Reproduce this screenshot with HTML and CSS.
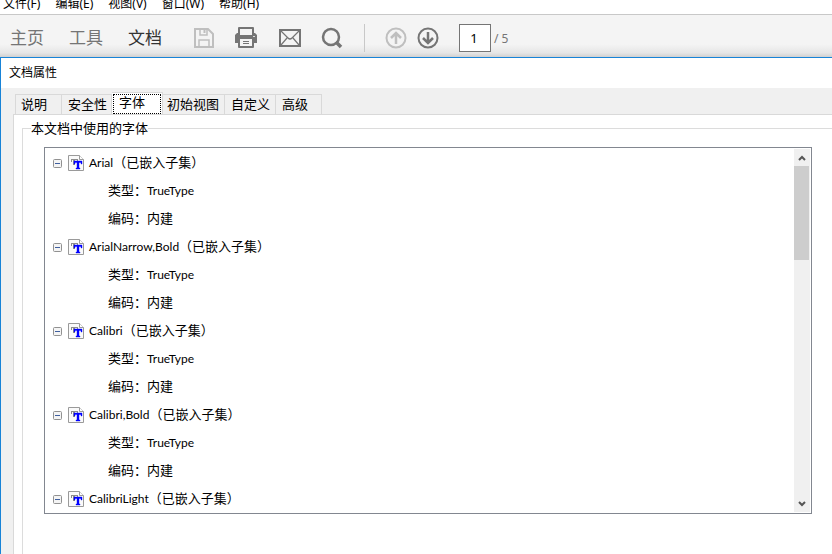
FILE: index.html
```html
<!DOCTYPE html>
<html lang="zh-CN">
<head>
    <meta charset="UTF-8">
    <title>文档属性</title>
    <link rel="stylesheet" href="styles.css">
</head>
<body>
    <!-- Iconos compartidos -->
    <svg class="sprite" width="0" height="0">
        <symbol id="minus" viewBox="0 0 9 9">
            <rect x=".5" y=".5" width="8" height="8" rx="1" fill="#f4f4f4" stroke="#919191"/>
            <path d="M2 4.500h5" stroke="#3f5f9f"/>
        </symbol>
        <symbol id="truetype" viewBox="0 0 16 16">
            <path d="M.5.5h11l4 4v11H.5z" fill="#fafafa" stroke="#9a9a9a"/>
            <path d="M11.500.5v4h4" fill="#fff" stroke="#9a9a9a"/>
            <path d="M3 7V4h7v3H9V5H7v5H5V5H4v2z" fill="#8c8c8c"/>
            <path d="M6 9V6h8v3h-1V7.500h-2V13h1v1H8v-1h1V7.500H7V9z" fill="#0000ff" stroke="#0000ff" stroke-width=".4"/>
        </symbol>
    </svg>

    <nav class="menubar">
        <button class="menu">文件(F)</button>
        <button class="menu">编辑(E)</button>
        <button class="menu">视图(V)</button>
        <button class="menu">窗口(W)</button>
        <button class="menu">帮助(H)</button>
    </nav>

    <div class="toolbar">
        <div class="views">
            <button class="view">主页</button>
            <button class="view">工具</button>
            <button class="view active">文档</button>
        </div>
        <div class="tools">
            <button class="tool disabled" aria-label="保存">
                <svg width="22" height="22" viewBox="0 0 22 22" fill="none" stroke="currentColor" stroke-width="2">
                    <path d="M2 2h13l5 5v13H2z"/>
                    <path d="M7 2v6h7V2M6 20v-7h10v7" stroke-width="1.500"/>
                    <path d="M11.500 3v3"/>
                </svg>
            </button>
            <button class="tool" aria-label="打印">
                <svg width="22" height="22" viewBox="0 0 22 22">
                    <path d="M2 1q0-1 1-1h14q1 0 1 1v6H2z" fill="currentColor"/>
                    <path d="M4 2h12v5H4z" fill="#f4f4f4"/>
                    <path d="M1 6h3v2h12V6h3l2 2v8h-3v4q0 1-1 1H3q-1 0-1-1v-4H-1V8z" fill="currentColor"/>
                    <path d="M4 12h12v7H4z" fill="#f4f4f4"/>
                    <path d="M7 14.500h6M7 16.500h6" stroke="currentColor"/>
                    <path d="M17 9h2v1h-2z" fill="#ddd"/>
                </svg>
            </button>
            <button class="tool" aria-label="电子邮件">
                <svg width="22" height="22" viewBox="0 0 22 22" fill="none" stroke="currentColor">
                    <path d="M1 3h20v16H1z" stroke-width="2"/>
                    <path d="M2 4l7 7q2 2 4 0l7-7M2 18l6-7M20 18l-6-7" stroke-width="1.200"/>
                </svg>
            </button>
            <button class="tool" aria-label="查找">
                <svg width="22" height="22" viewBox="0 0 22 22" fill="none" stroke="currentColor">
                    <circle cx="9" cy="10" r="8" stroke-width="2.500"/>
                    <path d="M14 15l5 5" stroke-width="3.500"/>
                </svg>
            </button>
        </div>
        <div class="pager">
            <button class="tool disabled" aria-label="上一页">
                <svg width="22" height="22" viewBox="0 0 22 22" fill="none" stroke="currentColor" stroke-width="2">
                    <circle cx="11" cy="11" r="9.500"/>
                    <path d="M11 17V6M6 11l5-5 5 5" stroke-width="2.500"/>
                </svg>
            </button>
            <button class="tool" aria-label="下一页">
                <svg width="22" height="22" viewBox="0 0 22 22" fill="none" stroke="currentColor" stroke-width="2">
                    <circle cx="11" cy="11" r="9.500"/>
                    <path d="M11 5v11M6 11l5 5 5-5" stroke-width="2.500"/>
                </svg>
            </button>
            <input type="text" id="page" class="page" value="1" aria-label="页码">
            <label for="page" class="total">/ 5</label>
        </div>
    </div>

    <div class="dialog">
        <div class="title">文档属性</div>
        <div class="content">
            <div class="tabs" role="tablist">
                <button class="tab" role="tab">说明</button>
                <button class="tab" role="tab">安全性</button>
                <button class="tab selected" role="tab" aria-selected="true"><span>字体</span></button>
                <button class="tab" role="tab">初始视图</button>
                <button class="tab" role="tab">自定义</button>
                <button class="tab" role="tab">高级</button>
            </div>
            <div class="panel">
                <fieldset class="group">
                    <legend>本文档中使用的字体</legend>
                    <div class="list">
                        <ul class="tree">
                            <li class="font"><svg class="toggle"><use href="#minus"/></svg><svg class="type"><use href="#truetype"/></svg><span class="name"><span class="latin">Arial</span>（已嵌入子集）</span></li>
                            <li class="detail"><span class="name">类型：<span class="latin">TrueType</span></span></li>
                            <li class="detail"><span class="name">编码：内建</span></li>
                            <li class="font"><svg class="toggle"><use href="#minus"/></svg><svg class="type"><use href="#truetype"/></svg><span class="name"><span class="latin">ArialNarrow,Bold</span>（已嵌入子集）</span></li>
                            <li class="detail"><span class="name">类型：<span class="latin">TrueType</span></span></li>
                            <li class="detail"><span class="name">编码：内建</span></li>
                            <li class="font"><svg class="toggle"><use href="#minus"/></svg><svg class="type"><use href="#truetype"/></svg><span class="name"><span class="latin">Calibri</span>（已嵌入子集）</span></li>
                            <li class="detail"><span class="name">类型：<span class="latin">TrueType</span></span></li>
                            <li class="detail"><span class="name">编码：内建</span></li>
                            <li class="font"><svg class="toggle"><use href="#minus"/></svg><svg class="type"><use href="#truetype"/></svg><span class="name"><span class="latin">Calibri,Bold</span>（已嵌入子集）</span></li>
                            <li class="detail"><span class="name">类型：<span class="latin">TrueType</span></span></li>
                            <li class="detail"><span class="name">编码：内建</span></li>
                            <li class="font"><svg class="toggle"><use href="#minus"/></svg><svg class="type"><use href="#truetype"/></svg><span class="name"><span class="latin">CalibriLight</span>（已嵌入子集）</span></li>
                        </ul>
                        <div class="scrollbar">
                            <button class="arrow" aria-label="向上滚动">
                                <svg width="8" height="6" viewBox="0 0 8 6"><path d="M1 5l3-3 3 3" fill="none" stroke="#555" stroke-width="2"/></svg>
                            </button>
                            <div class="track"><div class="thumb"></div></div>
                            <button class="arrow" aria-label="向下滚动">
                                <svg width="8" height="6" viewBox="0 0 8 6"><path d="M1 1l3 3 3-3" fill="none" stroke="#555" stroke-width="2"/></svg>
                            </button>
                        </div>
                    </div>
                </fieldset>
            </div>
        </div>
    </div>
</body>
</html>
```
FILE: styles.css
```css
* {
    box-sizing: border-box;
}
body {
    display: flex;
    flex-direction: column;
    min-height: 100vh;
    margin: 0;
    background: #fff;
    color: #000;
    font-family: "Noto Sans", "Noto Sans CJK SC", sans-serif;
    font-size: 13px;
    overflow: hidden;
}
button {
    margin: 0;
    padding: 0;
    border: none;
    background: none;
    color: inherit;
    font: inherit;
    white-space: nowrap;
}
.sprite {
    position: absolute;
}
.menubar {
    display: flex;
    align-items: flex-end;
    gap: 15px;
    height: 15px;
    padding: 0 3px 1px;
    border-bottom: 1px solid #c8c8c8;
    overflow: hidden;
}
.menu {
    font-size: 12px;
    line-height: 18px;
}
.toolbar {
    display: flex;
    align-items: center;
    height: 42px;
    padding: 4px 10px 0;
    background: linear-gradient(#f4f4f4 70%, #e6e6e6 90%, #d0d0d0);
    color: #757575;
}
.views {
    display: flex;
    gap: 25px;
}
.view {
    font-size: 17px;
    line-height: 24px;
}
.view.active {
    color: #333;
}
.tools {
    display: flex;
    gap: 21px;
    padding: 0 20px 0 31px;
}
.tool {
    width: 22px;
    height: 22px;
}
.tool svg {
    display: block;
    overflow: visible;
}
.tool.disabled {
    color: #bfbfbf;
}
.pager {
    display: flex;
    align-items: center;
    gap: 10px;
    height: 28px;
    padding-left: 20px;
    border-left: 1px solid #c8c8c8;
}
.page {
    width: 32px;
    height: 28px;
    margin-left: 10px;
    padding: 0 2px 0 0;
    border: 1px solid #757575;
    background: #fff;
    font: inherit;
    text-align: center;
}
.total {
    margin-left: -7px;
    font-size: 12px;
}
.dialog {
    display: flex;
    flex-direction: column;
    flex: 1;
    border-top: 1px solid #1883d7;
    border-left: 1px solid #1883d7;
}
.title {
    height: 30px;
    padding-left: 8px;
    background: #fff;
    font-size: 12px;
    line-height: 30px;
}
.content {
    display: flex;
    flex-direction: column;
    flex: 1;
    padding: 4px 0 0 12px;
    background: #f0f0f0;
}
.tabs {
    display: flex;
    align-items: flex-end;
    padding-left: 2px;
}
.tab {
    height: 20px;
    padding: 0 5px 1px;
    border: 1px solid #d9d9d9;
    border-width: 1px 1px 0 0;
    line-height: 18px;
}
.tab:first-child {
    padding-right: 14px;
    border-left-width: 1px;
}
.tab:last-child {
    padding-right: 13px;
    padding-left: 6px;
}
.tab:nth-child(2) {
    padding-left: 6px;
    padding-right: 4px;
}
.tab:nth-child(4) {
    padding-left: 4px;
}
.tab:nth-child(5) {
    padding-left: 6px;
}
.tab.selected {
    height: 23px;
    margin-bottom: -1px;
    padding: 1px;
    background: #fff;
}
.selected span {
    display: block;
    height: 20px;
    padding: 0 15px 0 5px;
    border: 1px dotted #000;
    line-height: 15px;
}
.panel {
    display: flex;
    flex: 1;
    padding: 5px 0 0 8px;
    border: 1px solid #d9d9d9;
    border-width: 1px 0 0 1px;
    background: #fff;
}
.group {
    flex: 1;
    min-width: 0;
    margin: 0;
    padding: 11px 20px 0 21px;
    border: 1px solid #dcdcdc;
    border-width: 1px 0 0 1px;
}
.group legend {
    margin-left: -13px;
    padding: 0;
    line-height: 16px;
}
.list {
    display: flex;
    padding: 0 1px 1px 0;
    border: 1px solid #828790;
}
.tree {
    flex: 1;
    margin: 0;
    padding: 0;
    list-style: none;
}
.tree li {
    display: flex;
    align-items: center;
    height: 28px;
}
.tree .font {
    padding-left: 8px;
}
.tree .detail {
    padding-left: 63px;
}
.toggle,
.type {
    width: 9px;
    height: 9px;
    margin: 2px 6px 0 0;
}
.type {
    width: 16px;
    height: 16px;
    margin-right: 5px;
}
.name {
    line-height: 20px;
}
.latin {
    font-family: Lato, sans-serif;
    font-size: 12px;
}
.scrollbar {
    display: flex;
    flex-direction: column;
    width: 16px;
    margin-top: 1px;
    background: #f0f0f0;
}
.arrow {
    display: flex;
    align-items: center;
    justify-content: center;
    height: 17px;
}
.track {
    flex: 1;
}
.thumb {
    width: 15px;
    height: 94px;
    background: #cdcdcd;
}
```
